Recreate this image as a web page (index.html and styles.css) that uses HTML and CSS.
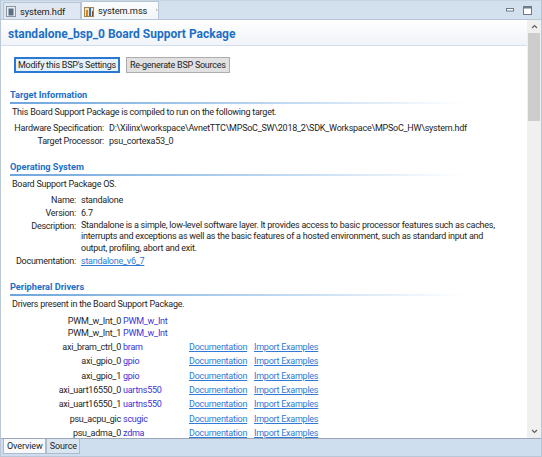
FILE: index.html
```html
<!DOCTYPE html>
<html>
<head>
<meta charset="utf-8">
<link rel="stylesheet" href="styles.css">
</head>
<body>
<div class="window">
  <div class="tabbar">
    <div class="tab">
      <svg class="ticon" width="11" height="12" viewBox="0 0 11 12"><rect x="0.5" y="1.5" width="9" height="10" fill="#e9eef3" stroke="#8b97a3"/><rect x="2.5" y="3.5" width="5" height="7" fill="#5d6f80"/></svg>
      <span>system.hdf</span>
    </div>
    <div class="tab active">
      <svg class="ticon" width="11" height="12" viewBox="0 0 11 12"><rect x="0.5" y="2.5" width="9" height="9" fill="#f3e6c4" stroke="#a08250"/><rect x="2" y="5" width="2" height="6" fill="#d9821e"/><rect x="5" y="3" width="2" height="8" fill="#3a6fb3"/><rect x="8" y="6" width="1" height="5" fill="#7a4a1a"/></svg>
      <span>system.mss</span>
      <svg class="close" width="9" height="9" viewBox="0 0 9 9"><rect x="0.5" y="0.5" width="8" height="8" fill="none" stroke="#a6a6a6"/><path d="M2.5 2.5 L6.5 6.5 M6.5 2.5 L2.5 6.5" stroke="#8a8a8a" stroke-width="1.1"/></svg>
    </div>
    <div class="spacer"></div>
    <div class="wincontrols">
      <svg width="8" height="4" viewBox="0 0 8 4"><rect x="0.5" y="0.5" width="7" height="2.5" fill="#fff" stroke="#6d7a88"/></svg>
      <svg width="9" height="9" viewBox="0 0 9 9"><rect x="0.5" y="0.5" width="8" height="8" fill="#fff" stroke="#6d7a88"/><rect x="0.5" y="0.5" width="8" height="2" fill="#6d7a88"/></svg>
    </div>
  </div>
  <div class="main">
    <div class="content">
      <div class="header"><h1>standalone_bsp_0 Board Support Package</h1></div>
      <div class="body">
        <div class="buttons">
          <button class="btn focused">Modify this BSP's Settings</button>
          <button class="btn">Re-generate BSP Sources</button>
        </div>

        <section class="sec">
          <h2>Target Information</h2>
          <p class="intro">This Board Support Package is compiled to run on the following target.</p>
          <div class="kv kv-target">
            <span class="k">Hardware Specification:</span><span class="v">D:\Xilinx\workspace\AvnetTTC\MPSoC_SW\2018_2\SDK_Workspace\MPSoC_HW\system.hdf</span>
            <span class="k">Target Processor:</span><span class="v">psu_cortexa53_0</span>
          </div>
        </section>

        <section class="sec">
          <h2>Operating System</h2>
          <p class="intro">Board Support Package OS.</p>
          <div class="kv kv-os">
            <span class="k">Name:</span><span class="v">standalone</span>
            <span class="k">Version:</span><span class="v">6.7</span>
            <span class="k">Description:</span><span class="v desc">Standalone is a simple, low-level software layer. It provides access to basic processor features such as caches, interrupts and exceptions as well as the basic features of a hosted environment, such as standard input and output, profiling, abort and exit.</span>
            <span class="k">Documentation:</span><span class="v"><a class="link">standalone_v6_7</a></span>
          </div>
        </section>

        <section class="sec">
          <h2>Peripheral Drivers</h2>
          <p class="intro">Drivers present in the Board Support Package.</p>
          <div class="drivers">
            <div class="drow plain"><span class="dn">PWM_w_Int_0</span><span class="dd">PWM_w_Int</span></div>
            <div class="drow plain"><span class="dn">PWM_w_Int_1</span><span class="dd">PWM_w_Int</span></div>
            <div class="drow"><span class="dn">axi_bram_ctrl_0</span><span class="dd">bram</span><a class="link">Documentation</a><a class="link">Import Examples</a></div>
            <div class="drow"><span class="dn">axi_gpio_0</span><span class="dd">gpio</span><a class="link">Documentation</a><a class="link">Import Examples</a></div>
            <div class="drow"><span class="dn">axi_gpio_1</span><span class="dd">gpio</span><a class="link">Documentation</a><a class="link">Import Examples</a></div>
            <div class="drow"><span class="dn">axi_uart16550_0</span><span class="dd">uartns550</span><a class="link">Documentation</a><a class="link">Import Examples</a></div>
            <div class="drow"><span class="dn">axi_uart16550_1</span><span class="dd">uartns550</span><a class="link">Documentation</a><a class="link">Import Examples</a></div>
            <div class="drow"><span class="dn">psu_acpu_gic</span><span class="dd">scugic</span><a class="link">Documentation</a><a class="link">Import Examples</a></div>
            <div class="drow"><span class="dn">psu_adma_0</span><span class="dd">zdma</span><a class="link">Documentation</a><a class="link">Import Examples</a></div>
          </div>
        </section>
      </div>
    </div>
    <div class="scrollbar">
      <div class="arrow up"><svg width="7" height="5" viewBox="0 0 7 5"><path d="M1 4 L3.5 1.5 L6 4" fill="none" stroke="#606060" stroke-width="1.2"/></svg></div>
      <div class="track"><div class="thumb"></div></div>
      <div class="arrow down"><svg width="7" height="5" viewBox="0 0 7 5"><path d="M1 1 L3.5 3.5 L6 1" fill="none" stroke="#606060" stroke-width="1.2"/></svg></div>
    </div>
  </div>
  <div class="bottombar">
    <div class="btab active">Overview</div>
    <div class="btab">Source</div>
  </div>
</div>
</body>
</html>
```
FILE: styles.css
```css
* { box-sizing: border-box; }
html, body { margin: 0; padding: 0; }
body {
  font-family: Roboto, "Open Sans", sans-serif;
  font-size: 9px;
  letter-spacing: -0.25px;
  color: #1e1e1e;
  background: #fff;
}
.window {
  width: 542px;
  height: 457px;
  display: flex;
  flex-direction: column;
  background: #cfdeee;
  border-left: 1px solid #b9c7d6;
  border-right: 1px solid #b9c7d6;
  border-bottom: 1px solid #b9c7d6;
  overflow: hidden;
}
.tabbar {
  height: 19px;
  display: flex;
  align-items: flex-end;
  background: #d3e1ef;
  border-top: 1px solid #c6d3e1;
  padding-left: 2px;
  flex: none;
}
.tab {
  width: 78px;
  height: 17px;
  display: flex;
  align-items: center;
  gap: 3px;
  padding: 0 0 0 2px;
  border: 1px solid #b7c6d6;
  border-bottom: none;
  background: #dfe8f2;
  color: #222;
  font-size: 9.3px;
  letter-spacing: -0.1px;
}
.tab .ticon { flex: none; }
.tab.active {
  background: linear-gradient(#fbfcfe, #f2f5f9);
  height: 18px;
}
.tab .close { margin-left: 6px; }
.spacer { flex: 1; }
.wincontrols {
  display: flex;
  align-items: center;
  gap: 9px;
  align-self: center;
  padding-right: 9px;
}
.main {
  flex: 1;
  display: flex;
  min-height: 0;
  background: #fff;
  border-top: 1px solid #b7c6d6;
  border-bottom: 1px solid #9aa8b8;
}
.content {
  flex: 1;
  min-width: 0;
  overflow: hidden;
}
.header {
  height: 26px;
  background: linear-gradient(#ffffff, #f0f3f8);
  border-bottom: 1px solid #d3deeb;
  padding: 6px 0 0 7px;
}
h1 {
  margin: 0;
  font-size: 12px;
  line-height: 16px;
  font-weight: 700;
  letter-spacing: 0;
  color: #1d6fc6;
}
.body { padding: 0; }
.buttons {
  display: flex;
  gap: 6px;
  margin: 11px 0 0 13px;
}
.btn {
  font-family: inherit;
  font-size: 9px;
  letter-spacing: -0.25px;
  height: 16px;
  padding: 0 3px;
  background: #e1e1e1;
  border: 1px solid #adadad;
  color: #1e1e1e;
}
.btn.focused {
  border: 2px solid #2a78d3;
  background: #e5f1fb;
  padding: 0 2px;
}
.sec { margin-top: 16px; }
.sec + .sec { margin-top: 13.5px; }
h2 {
  margin: 0 0 0 9px;
  font-size: 9.2px;
  line-height: 12px;
  font-weight: 700;
  letter-spacing: 0;
  color: #1d6fc6;
  padding-bottom: 1px;
  width: 455px;
  border-bottom: 2px solid transparent;
  border-image: linear-gradient(to right, #6ea5dc, #b9d4ef 55%, rgba(255,255,255,0)) 1;
}
.intro { margin: 1.5px 0 0 11px; line-height: 13px; }
.kv {
  display: grid;
  column-gap: 5px;
  line-height: 13px;
  margin-top: 3px;
  margin-left: 8px;
}
.kv .k { text-align: right; white-space: nowrap; }
.kv-target { grid-template-columns: 95px 1fr; }
.kv-os { grid-template-columns: 67px 1fr; }
.desc { line-height: 11.7px; padding-right: 18px; }
.link {
  color: #2f7ad6;
  text-decoration: underline;
  cursor: pointer;
  white-space: nowrap;
}
.drivers { margin-top: 4px; margin-left: 8px; }
.drow {
  display: grid;
  grid-template-columns: 112px 64px 63px auto;
  column-gap: 2px;
  align-items: center;
  height: 14.4px;
}
.drow.plain { height: 12.5px; }
.dn { text-align: right; white-space: nowrap; }
.dd { color: #3a33d9; }
.scrollbar {
  width: 14px;
  flex: none;
  background: #f0f0f0;
  display: flex;
  flex-direction: column;
}
.arrow {
  height: 13px;
  display: flex;
  align-items: center;
  justify-content: center;
}
.track { flex: 1; }
.thumb {
  margin: 0 1px;
  height: 88px;
  background: #cdcdcd;
}
.bottombar {
  height: 17px;
  flex: none;
  display: flex;
  align-items: flex-start;
  background: #cfdeee;
  padding-left: 2px;
}
.btab {
  height: 15px;
  padding: 0 2px 0 3px;
  border: 1px solid #adbccd;
  border-top: none;
  background: #d9e5f1;
  line-height: 14px;
  font-size: 9px;
  letter-spacing: -0.1px;
}
.btab.active { background: #f7f9fc; }
```
